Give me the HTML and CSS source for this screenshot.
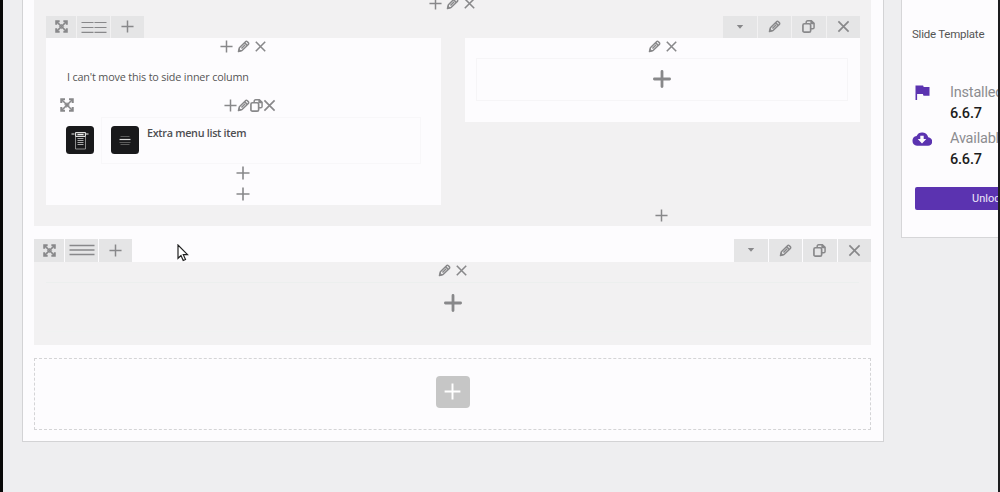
FILE: index.html
```html
<!DOCTYPE html>
<html lang="en">
  <head>
    <meta charset="UTF-8" />
    <meta name="viewport" content="width=device-width, initial-scale=1.0" />
    <title>Page Builder</title>
    <link rel="stylesheet" href="styles.css">
  </head>
  <body>
    <!-- Shared icons -->
    <svg class="sprite" aria-hidden="true">
      <symbol id="plus" viewBox="0 0 14 14">
        <path d="M7 .5v13M.5 7h13" fill="none" stroke="currentColor" stroke-width="1.6" />
      </symbol>
      <symbol id="plus-bold" viewBox="0 0 18 18">
        <path d="M9 1.4v15.2M1.4 9h15.2" fill="none" stroke="currentColor" stroke-width="2.8" stroke-linecap="round" />
      </symbol>
      <symbol id="pencil" viewBox="0 0 14 14">
        <path d="M1.6 12.4l1-4L9.2 1.8q1-.8 2 .1l.9.9q.9 1 .1 2L5.4 11.4zM8.2 2.9l2.900 2.900M4.800 9.200l4-4" fill="none" stroke="currentColor" stroke-width="1.6" stroke-linejoin="round" />
        <path d="M1 13l1-4 3 3z" fill="currentColor" />
      </symbol>
      <symbol id="close" viewBox="0 0 14 14">
        <path d="M1.500 1.500l11 11M12.500 1.500l-11 11" fill="none" stroke="currentColor" stroke-width="1.800" />
      </symbol>
      <symbol id="copy" viewBox="0 0 14 14">
        <path d="M4.500 4V2.500q0-1.600 1.600-1.600h4L13 3.600V8q0 1.500-1.500 1.500H9.400M9.800 1v2.800H13" fill="none" stroke="currentColor" stroke-width="1.600" />
        <rect x="1" y="4" width="8.3" height="9.1" rx="1.6" fill="none" stroke="currentColor" stroke-width="1.8" />
      </symbol>
      <symbol id="move" viewBox="0 0 14 14">
        <path d="M2 2l10 10M12 2L2 12" fill="none" stroke="currentColor" stroke-width="1.6" />
        <path d="M1.300 5V1.300H5M9 1.300h3.700V5M12.700 9v3.700H9M5 12.700H1.300V9" fill="none" stroke="currentColor" stroke-width="2.100" />
        <path d="M7 4.700L9.300 7 7 9.300 4.700 7z" fill="none" stroke="currentColor" stroke-width="1" />
      </symbol>
      <symbol id="caret" viewBox="0 0 8 6">
        <path d="M.8 1h6.4L4 4.800z" fill="currentColor" />
      </symbol>
    </svg>

    <div class="screen">
      <main class="editor">
        <section class="row row-nested">
          <div class="controls controls-top">
            <svg><use href="#plus" /></svg>
            <svg><use href="#pencil" /></svg>
            <svg><use href="#close" /></svg>
          </div>

          <div class="toolbar">
            <div class="tabs">
              <span class="tab tab-move"><svg><use href="#move" /></svg></span>
              <span class="tab tab-layout">
                <svg class="layout" viewBox="0 0 26 12"><path d="M.5 1.500h12M13.500 1.500h12M.5 6.500h12M13.500 6.500h12M.5 11.300h12M13.500 11.300h12" stroke="currentColor" stroke-width="1.200" /></svg>
              </span>
              <span class="tab tab-add"><svg><use href="#plus" /></svg></span>
            </div>
            <div class="tabs">
              <span class="tab"><svg class="caret"><use href="#caret" /></svg></span>
              <span class="tab"><svg><use href="#pencil" /></svg></span>
              <span class="tab"><svg><use href="#copy" /></svg></span>
              <span class="tab"><svg><use href="#close" /></svg></span>
            </div>
          </div>

          <div class="columns">
            <div class="column column-left">
              <div class="controls">
                <svg><use href="#plus" /></svg>
                <svg><use href="#pencil" /></svg>
                <svg><use href="#close" /></svg>
              </div>
              <p class="text-block">I can't move this to side inner column</p>
              <div class="element-bar">
                <svg><use href="#move" /></svg>
                <div class="controls controls-tight">
                  <svg><use href="#plus" /></svg>
                  <svg><use href="#pencil" /></svg>
                  <svg><use href="#copy" /></svg>
                  <svg><use href="#close" /></svg>
                </div>
              </div>
              <div class="element">
                <svg class="thumb" viewBox="0 0 28 28">
                  <rect width="28" height="28" rx="3.5" fill="#19191b" />
                  <path d="M5.500 8h3M19.500 8h3" stroke="#aaa" stroke-width="1.500" />
                  <path d="M9.500 10.500v12.500h10V10.500" fill="none" stroke="#aaa" stroke-width=".8" />
                  <path d="M9.500 6.500h10v4h-10z" fill="#444" stroke="#ddd" />
                  <path d="M11.500 8.500h6" stroke="#eee" stroke-width="1.300" />
                  <path d="M11.500 12.500h6M11.500 14.500h6M11.500 16.500h6M11.500 18.500h6" stroke="#aaa" />
                </svg>
                <div class="element-box">
                  <svg class="thumb" viewBox="0 0 28 28">
                    <rect width="28" height="28" rx="3.5" fill="#19191b" />
                    <path d="M9.500 10.500h9M8.500 16.500h11M9.500 18.500h9" stroke="#5c5c5c" />
                    <path d="M8.500 13.500h11" stroke="#ddd" stroke-width="1.200" />
                  </svg>
                  <h4>Extra menu list item</h4>
                </div>
              </div>
              <div class="add-stack">
                <svg><use href="#plus" /></svg>
                <svg><use href="#plus" /></svg>
              </div>
            </div>

            <div class="column-side">
              <div class="column column-right">
                <div class="controls">
                  <svg><use href="#pencil" /></svg>
                  <svg><use href="#close" /></svg>
                </div>
                <div class="empty-box"><svg class="big"><use href="#plus-bold" /></svg></div>
              </div>
              <svg class="add-after"><use href="#plus" /></svg>
            </div>
          </div>
        </section>

        <div class="toolbar toolbar-second">
          <div class="tabs">
            <span class="tab tab-move"><svg><use href="#move" /></svg></span>
            <span class="tab tab-layout">
              <svg class="layout" viewBox="0 0 26 12"><path d="M.5 1.500h25M.5 6h25M.5 10.500h25" stroke="currentColor" stroke-width="1.400" /></svg>
            </span>
            <span class="tab tab-add"><svg><use href="#plus" /></svg></span>
          </div>
          <div class="tabs">
            <span class="tab"><svg class="caret"><use href="#caret" /></svg></span>
            <span class="tab"><svg><use href="#pencil" /></svg></span>
            <span class="tab"><svg><use href="#copy" /></svg></span>
            <span class="tab"><svg><use href="#close" /></svg></span>
          </div>
        </div>
        <section class="row row-empty">
          <div class="controls">
            <svg><use href="#pencil" /></svg>
            <svg><use href="#close" /></svg>
          </div>
          <div class="empty-area"><svg class="big"><use href="#plus-bold" /></svg></div>
        </section>

        <div class="dropzone">
          <button class="add-button" type="button" aria-label="Add element">
            <svg><use href="#plus" /></svg>
          </button>
        </div>
      </main>

      <aside class="sidebar">
        <p class="template">Slide Template</p>
        <div class="version">
          <svg viewBox="0 0 20 20"><path d="M3.500 2.500h7.600l.6 1.600h5.800v8.600h-6l-.6-1.600H5.100v6H3.500z" fill="currentColor" /></svg>
          <div>
            <span>Installed</span>
            <strong>6.6.7</strong>
          </div>
        </div>
        <div class="version">
          <svg viewBox="0 0 20 20"><path fill-rule="evenodd" d="M16.200 8.300A6.200 6.200 0 0 0 4.600 6.900 5 5 0 0 0 5 16.800h10.800a4.200 4.200 0 0 0 .4-8.500zM8.300 6.700h3.400v3.400h2.600L10 14.500 5.700 10.100h2.600z" fill="currentColor" /></svg>
          <div>
            <span>Available</span>
            <strong>6.6.7</strong>
          </div>
        </div>
        <button class="unlock" type="button">Unlock</button>
      </aside>

      <svg class="cursor" viewBox="0 0 12 18">
        <path d="M1 1v13.300l3-2.700 2.200 4.800 2.300-1-2.200-4.700h4.200z" fill="#fff" stroke="#222" stroke-width="1.200" />
      </svg>
    </div>
  </body>
</html>
```

FILE: styles.css
```css
* {
  margin: 0;
  padding: 0;
  box-sizing: border-box;
}

body {
  font-family: "Open Sans", "Noto Sans", sans-serif;
  background: #eeeef0;
  color: #555;
}

svg {
  display: block;
  flex: none;
  width: 14px;
  height: 14px;
}

.sprite {
  display: none;
}

.screen {
  position: relative;
  display: flex;
  align-items: flex-start;
  height: 492px;
  padding-left: 19px;
  border-left: 3px solid #080808;
  border-right: 2px solid #1c1c1e;
  overflow: hidden;
}

.editor {
  flex: none;
  width: 862px;
  height: 442px;
  padding: 0 12px 0 11px;
  background: #fdfcfe;
  border: 1px solid #d3d3d5;
  border-top: none;
}

.row {
  background: #f2f1f2;
  color: #88888a;
}

.row-nested {
  height: 226px;
  padding: 0 11px 0 12px;
}

.controls {
  display: flex;
  justify-content: center;
  gap: 4px;
}

.controls svg {
  width: 13px;
  height: 13px;
}

.controls svg:last-child {
  padding: 0.5px;
}

.controls-top {
  height: 13px;
}

.controls-top svg {
  margin: -3px 1px 0 -1px;
}

.toolbar {
  display: flex;
  justify-content: space-between;
  height: 22px;
  color: #88888a;
}

.row-nested .toolbar {
  margin-top: 3px;
}

.tabs {
  display: flex;
  gap: 1px;
}

.tab {
  display: flex;
  align-items: center;
  justify-content: center;
  width: 33.5px;
  padding-bottom: 1px;
  background: #e5e5e6;
}

.tab svg {
  width: 13px;
  height: 13px;
}

.tab-move {
  width: 30px;
}

.tab-layout {
  width: 33px;
}

.tab-add {
  width: 33px;
}

.tab .layout {
  width: 26px;
  height: 12px;
}

.tab .caret {
  width: 8px;
  height: 6px;
}

.columns {
  display: flex;
  justify-content: space-between;
}

.column {
  width: 395px;
  padding-top: 2px;
  background: #fdfcfe;
}

.column-left {
  height: 167px;
}

.column-right {
  height: 84px;
}

.text-block {
  margin: 16px 0 0 21px;
  font-size: 10.8px;
  line-height: 16px;
  letter-spacing: -0.16px;
  color: #555;
  white-space: nowrap;
}

.element-bar {
  display: flex;
  align-items: center;
  height: 14px;
  margin: 13px 0 0 14px;
}

.element-bar .controls {
  margin-left: 150px;
}

.controls-tight {
  gap: 0;
}

.controls-tight svg:last-child {
  padding: 0;
}

.element {
  display: flex;
  margin: 5px 0 0 20px;
}

.thumb {
  width: 28px;
  height: 28px;
}

.element > .thumb {
  margin-top: 9px;
}

.element-box {
  display: flex;
  gap: 8px;
  width: 320px;
  height: 47px;
  margin-left: 7px;
  padding: 8px 0 0 9px;
  border: 1px solid #f8f7f9;
}

.element-box h4 {
  margin-top: -1px;
  font-size: 10.8px;
  font-weight: 600;
  line-height: 16px;
  letter-spacing: -0.3px;
  color: #4e4e52;
}

.add-stack {
  display: flex;
  flex-direction: column;
  align-items: center;
  gap: 7px;
  padding: 2px 1px 0 0;
}

.column-side {
  width: 395px;
}

.empty-box {
  display: flex;
  align-items: center;
  justify-content: center;
  height: 43px;
  margin: 5px 12px 0 11px;
  padding-bottom: 2px;
  border: 1px solid #f6f5f7;
}

.big {
  width: 18px;
  height: 18px;
}

.add-after {
  width: 13px;
  height: 13px;
  margin: 87px 0 0 190px;
}

.toolbar-second {
  height: 23px;
  margin-top: 13px;
}

.row-empty {
  height: 83px;
  padding-top: 2px;
}

.empty-area {
  display: flex;
  justify-content: center;
  height: 50px;
  margin: 5px 12px 0;
  padding-top: 11px;
  border-top: 1px solid #ecefee;
  border-bottom: 1px solid #f0f2f1;
}

.dropzone {
  display: flex;
  align-items: center;
  justify-content: center;
  height: 72px;
  margin-top: 13px;
  padding-bottom: 5px;
  border: 1px dashed #d4d4d6;
}

.add-button {
  display: flex;
  align-items: center;
  justify-content: center;
  width: 34px;
  height: 32px;
  border: none;
  border-radius: 4px;
  background: #c6c6c6;
  color: #fff;
}

.add-button svg {
  width: 17px;
  height: 17px;
}

.sidebar {
  flex: none;
  width: 260px;
  height: 238px;
  margin-left: 17px;
  padding: 26px 0 0 10px;
  background: #fdfcfe;
  border: 1px solid #d6d6d8;
  border-top: none;
  font-family: Roboto, sans-serif;
}

.template {
  margin-bottom: 41px;
  font-size: 11.5px;
  line-height: 16px;
  letter-spacing: -0.23px;
}

.version {
  display: flex;
  height: 46px;
  color: #5b33b0;
}

.version svg {
  width: 20px;
  height: 20px;
}

.version div {
  display: flex;
  flex-direction: column;
  margin-left: 18px;
}

.version span {
  font-size: 14.5px;
  line-height: 20px;
  letter-spacing: -0.2px;
  color: #8c8c90;
  white-space: nowrap;
}

.version strong {
  font-size: 14.5px;
  font-weight: 500;
  line-height: 22px;
  letter-spacing: -0.2px;
  color: #1c1c20;
}

.unlock {
  width: 226px;
  height: 23px;
  margin: 12px 0 0 3px;
  padding-left: 57px;
  border: none;
  border-radius: 2px;
  background: #5b33b0;
  color: #eee8fa;
  font-family: Roboto, sans-serif;
  font-size: 11px;
  text-align: left;
}

/* pointer floats over the page */
.cursor {
  position: absolute;
  left: 174px;
  top: 244px;
  width: 12px;
  height: 18px;
}
```
